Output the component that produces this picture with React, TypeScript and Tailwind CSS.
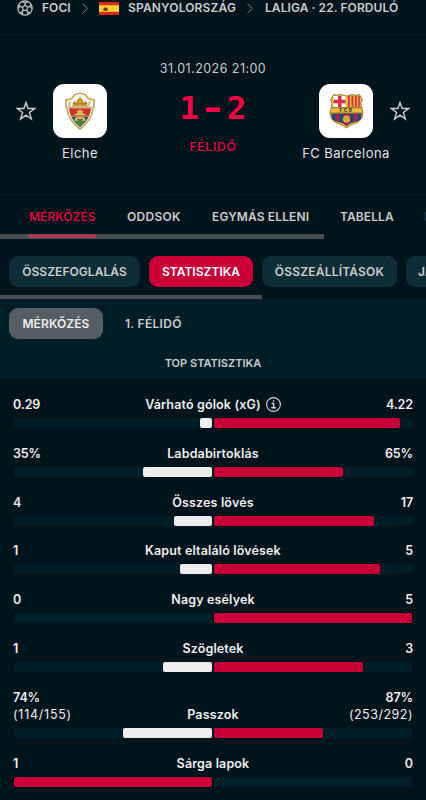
import type { ReactNode } from 'react';

type Stat = {
  label: string;
  home: string;
  away: string;
  homeDetail?: string;
  awayDetail?: string;
  homeWidth: number;
  awayWidth: number;
  homeLeads?: boolean;
  info?: boolean;
};

const stats: Stat[] = [
  { label: 'Várható gólok (xG)', home: '0.29', away: '4.22', homeWidth: 6, awayWidth: 94, info: true },
  { label: 'Labdabirtoklás', home: '35%', away: '65%', homeWidth: 35, awayWidth: 65 },
  { label: 'Összes lövés', home: '4', away: '17', homeWidth: 19, awayWidth: 81 },
  { label: 'Kaput eltaláló lövések', home: '1', away: '5', homeWidth: 16, awayWidth: 84 },
  { label: 'Nagy esélyek', home: '0', away: '5', homeWidth: 0, awayWidth: 100 },
  { label: 'Szögletek', home: '1', away: '3', homeWidth: 25, awayWidth: 75 },
  {
    label: 'Passzok',
    home: '74%',
    away: '87%',
    homeDetail: '(114/155)',
    awayDetail: '(253/292)',
    homeWidth: 45,
    awayWidth: 55,
  },
  { label: 'Sárga lapok', home: '1', away: '0', homeWidth: 100, awayWidth: 0, homeLeads: true },
];

function BallIcon() {
  return (
    <svg className="size-4 shrink-0" viewBox="0 0 16 16" fill="none" stroke="#c0c8c8" strokeWidth="1.2" strokeLinejoin="round">
      <circle cx="8" cy="8" r="7.2" />
      <path d="M8 5.2 10.7 7.2 9.7 10.4H6.3L5.3 7.2Z" />
      <path d="M8 5.2V3M10.7 7.2l2.2-.8M9.7 10.4l1.3 1.9M6.3 10.4 5 12.3M5.3 7.2l-2.2-.8" />
      <path d="M5.2 1.6 8 3l2.8-1.4M14.2 4.7l-1.3 1.7 2.1 2.3M13.3 12.6 11 12.3l-.9 2.4M5.9 14.7 5 12.3l-2.3.3M1 8.7l2.1-2.3-1.3-1.7" />
    </svg>
  );
}

function ChevronIcon({ className }: { className: string }) {
  return (
    <svg className={`h-[11px] w-[6px] shrink-0 ${className}`} viewBox="0 0 6 11" fill="none" stroke="#758086">
      <path d="M.5.5 5.3 5.5.5 10.5" />
    </svg>
  );
}

function SpainFlag() {
  return (
    <svg className="h-[13px] w-5 shrink-0" viewBox="0 0 20 13">
      <rect width="20" height="13" fill="#d52b1e" />
      <rect y="3.2" width="20" height="6.6" fill="#ffd02f" />
      <path d="M4 9V6.2h.8V9zM8.2 9V6.2H9V9z" fill="#9a5a2a" />
      <path d="M5 6.1h3v2q0 1-1.5 1T5 8.1zM5.3 5.7q1.2-1.6 2.4 0z" fill="#6d3528" />
    </svg>
  );
}

function StarIcon() {
  return (
    <svg className="size-5 shrink-0" viewBox="0 0 20 20" fill="none" stroke="#c8cdd0" strokeWidth="1.4">
      <path d="M10 1.5 12.1 7.5H18.7L13.4 11.5 15.4 18 10 14.1 4.6 18 6.6 11.5 1.3 7.5H7.9Z" />
    </svg>
  );
}

function ElcheCrest() {
  return (
    <svg className="h-[38px] w-8" viewBox="0 0 32 38">
      <path d="M10 3Q16-.5 22 3L23.5 6Q27 8 30.2 7.8L30 14.5 29 16Q28 28 16 37 4 28 3 16L2 14.5 1.8 7.8Q5 8 8.5 6Z" fill="#fff" stroke="#c9a85a" strokeWidth="1.7" />
      <path d="M5 16.3H27Q26.6 20.5 25 24H7Q5.4 20.5 5 16.3Z" fill="#ce3029" />
      <path d="M7 24H25Q22.5 30 16 35 9.5 30 7 24Z" fill="#23527b" />
      <path d="M16 27.5 22 29.5Q20 32 16 35 12 32 10 29.5Z" fill="#547e4b" />
      <path d="M8.5 14.5V11l2-2 2 1 1-3 1.5-.5 1-3 1 3 1.5.5 1 3 2-1 2 2v3.5Z" fill="#d5a43a" />
      <path d="M9 11.7H23M10.5 9.5l1 4.5M14 7v7M18 7v7M21.5 9.5l-1 4.5" stroke="#8a7a36" strokeWidth=".6" />
      <path d="M5 10v4M5 10h2.3M5 12h2M5 14h2.3M24.8 14v-4h2.5M24.8 12H27" stroke="#c9a85a" fill="none" strokeWidth=".9" />
      <path d="M4 15.2H28" stroke="#c9a85a" strokeWidth="1.3" />
      <path d="m16 16.5 1.5 2.2h2.5L18 20.5l3 1.5h2l-3 1.5h-8L9 22h2l3-1.5-2-1.8h2.5Z" fill="#dfb65d" />
      <path d="M10.5 29v-2.5l2-1.5h7l2 1.5V29h-3v-1.8h-5V29Z" fill="#d5b04c" />
      <path d="M6.5 24.3h19" stroke="#c9a85a" />
    </svg>
  );
}

function BarcelonaCrest() {
  return (
    <svg className="h-9 w-[35px]" viewBox="0 0 35 36">
      <defs>
        <clipPath id="barca-shield">
          <path d="M4.5 1.5Q8 3 11.5 1.5L17.5 3 23.5 1.5Q27 3 30.5 1.5L33.5 7Q31 10 32.5 14L34 19Q34 27 27.5 30 21 31.5 17.5 35 14 31.5 7.5 30 1 27 1 19L2.5 14Q4 10 1.5 7Z" />
        </clipPath>
      </defs>
      <g clipPath="url(#barca-shield)">
        <rect width="35" height="36" fill="#edbb38" />
        <path d="M4.5 3H16.5V14H4.5Z" fill="#fff" />
        <path d="M9 3h3.5v11H9zM4.5 6.8h12v3.4h-12z" fill="#db3047" />
        <path d="M19 3h1.8v11H19zM22.5 3h1.8v11h-1.8zM26 3h1.8v11H26zM29.2 3h1.6v11h-1.6z" fill="#db3047" />
        <path d="M2.5 20.5H32.5V25Q31 28 26 29 20 30 17.5 33 15 30 9 29 4 28 2.5 25Z" fill="#24477c" />
        <path d="M6.5 20.5h4v8.7l-4-1.5zM14.5 20.5h6V31l-3 2-3-2zM24.5 20.5h4v7.2l-4 1.5z" fill="#a52751" />
      </g>
      <path d="M4.5 1.5Q8 3 11.5 1.5L17.5 3 23.5 1.5Q27 3 30.5 1.5L33.5 7Q31 10 32.5 14L34 19Q34 27 27.5 30 21 31.5 17.5 35 14 31.5 7.5 30 1 27 1 19L2.5 14Q4 10 1.5 7Z" fill="none" stroke="#7b622f" strokeWidth=".8" />
      <path d="M2 14.7H33M1.5 20H33.5" stroke="#6b562c" strokeWidth=".7" />
      <text x="17.5" y="19.3" textAnchor="middle" fontFamily="Inter, sans-serif" fontSize="5" fontWeight="700" letterSpacing="1.3" fill="#303746">FCB</text>
      <circle cx="17.5" cy="26" r="3.6" fill="#edbb38" />
      <path d="m17.5 24.2 1.5 1.2-.6 1.8h-1.8l-.6-1.8zM17.5 24v-1.4M19 25.4l2-.5M16 25.4l-2-.5" stroke="#8e6c28" strokeWidth=".5" fill="none" />
    </svg>
  );
}

function InfoIcon() {
  return (
    <svg className="ml-[5px] size-[15px]" viewBox="0 0 15 15" fill="none" stroke="#d5d9db" strokeWidth="1.1">
      <circle cx="7.5" cy="7.5" r="6.9" />
      <path d="M7.6 3.2v1.6M5.6 6.5h2v4M5.2 10.8h4.7" strokeWidth="1.4" />
    </svg>
  );
}

function Team({ name, children }: { name: string; children: ReactNode }) {
  return (
    <div className="flex w-[54px] flex-col items-center">
      <div className="flex size-[54px] items-center justify-center rounded-[11px] bg-white">{children}</div>
      <span className="mt-[5px] text-[13px] leading-5 tracking-[0.45px] whitespace-nowrap text-[#e1e5e7]">{name}</span>
    </div>
  );
}

function StatRow({ stat }: { stat: Stat }) {
  return (
    <div>
      <div className="flex items-end text-[12.5px] leading-[17px] font-semibold text-[#eeeeee]">
        <div className="w-[90px]">
          <div className="tracking-[-0.1px]">{stat.home}</div>
          {stat.homeDetail && <div className="font-normal tracking-[0.75px]">{stat.homeDetail}</div>}
        </div>
        <div className="flex flex-1 items-center justify-center tracking-[0.15px] whitespace-nowrap">
          {stat.label}
          {stat.info && <InfoIcon />}
        </div>
        <div className="w-[90px] text-right">
          <div className="tracking-[-0.1px]">{stat.away}</div>
          {stat.awayDetail && <div className="-ml-2 font-normal tracking-[0.5px]">{stat.awayDetail}</div>}
        </div>
      </div>
      <div className="mx-px mt-[5px] flex h-[10px] gap-[2px]">
        <div className="flex flex-1 justify-end rounded-[2px] bg-[#001e28]">
          <div className={`rounded-[2px] ${stat.homeLeads ? 'bg-[#c80037]' : 'bg-[#eeeeee]'}`} style={{ width: `${stat.homeWidth}%` }} />
        </div>
        <div className="flex-1 rounded-[2px] bg-[#001e28]">
          <div className="h-full rounded-[2px] bg-[#c80037]" style={{ width: `${stat.awayWidth}%` }} />
        </div>
      </div>
    </div>
  );
}

export default function App() {
  return (
    <main className="h-[800px] w-[426px] overflow-hidden bg-[#00141c] font-['Inter','Liberation_Sans',sans-serif] text-[#c8cdcd]">
      <nav className="flex h-[35px] items-start border-b border-[#001b24] pl-[17px] text-[12px] leading-4 font-semibold whitespace-nowrap">
        <BallIcon />
        <span className="ml-[9px] w-[29px] tracking-[0.05px]">FOCI</span>
        <ChevronIcon className="mt-[3px] ml-[11px]" />
        <div className="mt-[2px] ml-[11px]">
          <SpainFlag />
        </div>
        <span className="ml-[9px] w-[108px] tracking-[0.15px]">SPANYOLORSZÁG</span>
        <ChevronIcon className="mt-[3px] ml-[11px]" />
        <span className="ml-[12px] tracking-[0.08px]">LALIGA · 22. FORDULÓ</span>
      </nav>

      <header className="flex h-[159px] items-start justify-between px-4 pt-[49px]">
        <div className="flex gap-[17px]">
          <div className="pt-[17px]">
            <StarIcon />
          </div>
          <Team name="Elche">
            <ElcheCrest />
          </Team>
        </div>
        <div className="-mt-[24px] flex flex-col items-center">
          <time className="text-[12.5px] leading-[18px] tracking-[0.45px]">31.01.2026 21:00</time>
          <div className="mt-[10px] flex gap-[4.4px] font-['DejaVu_Sans_Mono',monospace] text-[32px] leading-[41px] font-bold text-[#ff0046]">
            <span>1</span>
            <span className="scale-x-140">-</span>
            <span>2</span>
          </div>
          <div className="mt-[9px] text-[12px] leading-[18px] font-semibold tracking-[0.8px] text-[#dc003f]">FÉLIDŐ</div>
        </div>
        <div className="flex gap-[17px]">
          <Team name="FC Barcelona">
            <BarcelonaCrest />
          </Team>
          <div className="pt-[17px]">
            <StarIcon />
          </div>
        </div>
      </header>

      <nav className="h-[45px] overflow-hidden border-t border-[#001b24]">
        <div className="flex h-[39px] items-center gap-[30px] pt-[4px] pl-[29px] text-[12px] font-semibold whitespace-nowrap">
          <span className="w-[67px] shrink-0 tracking-[0.05px] text-[#dc003f]">MÉRKŐZÉS</span>
          <span className="ml-px w-[54px] shrink-0 tracking-[0.3px]">ODDSOK</span>
          <span className="ml-px w-[98px] shrink-0 tracking-[0.12px]">EGYMÁS ELLENI</span>
          <span className="w-[54px] shrink-0 tracking-[0.1px]">TABELLA</span>
          <span className="ml-px shrink-0">HÍREK</span>
        </div>
        <div className="h-[5px] w-[324px] bg-[#484e53] pl-[29px]">
          <div className="h-[4px] w-[67px] bg-[#a63d56]" />
        </div>
      </nav>

      <nav className="h-[60px] overflow-hidden pt-[17px]">
        <div className="flex gap-[9px] pl-[9px] text-[12px] leading-[31px] font-semibold whitespace-nowrap">
          <span className="w-[131px] shrink-0 rounded-[9px] bg-[#0f2d37] text-center tracking-[0.05px]">ÖSSZEFOGLALÁS</span>
          <span className="w-[104px] shrink-0 rounded-[9px] bg-[#c80037] text-center tracking-[0.05px] text-white">STATISZTIKA</span>
          <span className="w-[135px] shrink-0 rounded-[9px] bg-[#0f2d37] text-center tracking-[0.2px]">ÖSSZEÁLLÍTÁSOK</span>
          <span className="w-[150px] shrink-0 rounded-[9px] bg-[#0f2d37] pl-[12px]">JÁTÉKOSSTATISZTIKA</span>
        </div>
        <div className="mt-[8px] h-[4px] w-[262px] bg-[#484e53]" />
      </nav>

      <section className="bg-[#001e28]">
        <div className="flex h-[49px] gap-[22px] border-b border-[#001a23] pt-[9px] pl-[9px] text-[12px] leading-[31px] font-semibold">
          <span className="h-[31px] w-[94px] rounded-[9px] bg-[#555e62] text-center tracking-[0.1px] text-[#eeeeee]">MÉRKŐZÉS</span>
          <span className="tracking-[0.3px]">1. FÉLIDŐ</span>
        </div>
        <h2 className="h-[31px] text-center text-[11px] leading-[31px] font-semibold tracking-[0.02px]">TOP STATISZTIKA</h2>
      </section>

      <section className="flex flex-col gap-[16.8px] px-[13px] pt-[17px]">
        {stats.map((stat) => (
          <StatRow key={stat.label} stat={stat} />
        ))}
      </section>
    </main>
  );
}
